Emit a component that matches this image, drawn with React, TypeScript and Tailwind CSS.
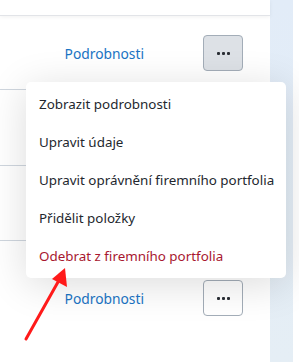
const menuItems = [
  { label: 'Zobrazit podrobnosti', danger: false },
  { label: 'Upravit údaje', danger: false },
  { label: 'Upravit oprávnění firemního portfolia', danger: false },
  { label: 'Přidělit položky', danger: false },
  { label: 'Odebrat z firemního portfolia', danger: true },
];

const Dots = () => (
  <span className="flex gap-[2px]">
    <span className="h-[3px] w-[3px] rounded-[1px] bg-[#2b2f36]" />
    <span className="h-[3px] w-[3px] rounded-[1px] bg-[#2b2f36]" />
    <span className="h-[3px] w-[3px] rounded-[1px] bg-[#2b2f36]" />
  </span>
);

const ActionRow = ({ active, className }: { active?: boolean; className: string }) => (
  <div className={`flex justify-end pr-[27px] ${className}`}>
    <div className="flex h-[36px] items-center">
      <a className="mr-[59px] pt-[2px] text-[13.8px] text-[#1a74c4]">Podrobnosti</a>
      <button
        className={`flex h-[36px] w-[40px] items-center justify-center rounded-[4px] border border-[#a3adb8] ${
          active ? 'bg-[#dde1e6]' : 'bg-white'
        }`}
      >
        <Dots />
      </button>
    </div>
  </div>
);

export default function App() {
  return (
    <div className="flex h-[362px] w-[299px] overflow-hidden bg-white font-['Noto_Sans',sans-serif]">
      <div className="relative w-[270px] bg-white">
        <div className="h-[16px] border-b border-[#e2e4e8] bg-white shadow-[0_1px_4px_rgba(0,0,0,0.06)]" />
        <ActionRow active className="h-[74px] items-start pt-[19px] border-b border-[#cfd6de]" />
        <div className="h-[76px] border-b border-[#cfd6de]" />
        <div className="h-[75px] border-b border-[#cfd6de]" />
        <ActionRow className="h-[113px] items-start pt-[39px]" />

        <div className="absolute left-[26px] top-[82px] w-[260px] rounded-[5px] bg-white py-[3px] shadow-[0_6px_40px_rgba(0,0,0,0.14)]">
          {menuItems.map((item) => (
            <div
              key={item.label}
              className={`flex h-[38px] items-center whitespace-nowrap px-[13px] pt-[1px] text-[13.4px] ${
                item.danger ? 'text-[#a8172f]' : 'text-[#23272e]'
              }`}
            >
              {item.label}
            </div>
          ))}
        </div>

        <svg className="absolute left-0 top-0" width="270" height="362" viewBox="0 0 270 362">
          <line x1="26" y1="339" x2="58" y2="282" stroke="#ff1a1a" strokeWidth="3" strokeLinecap="round" />
          <polygon points="65,268 67,287 52,279" fill="#ff1a1a" />
        </svg>
      </div>
      <div className="w-[23px] bg-[linear-gradient(#e2ecf8,#e5eef5)]" />
      <div className="flex-1 bg-white" />
    </div>
  );
}
